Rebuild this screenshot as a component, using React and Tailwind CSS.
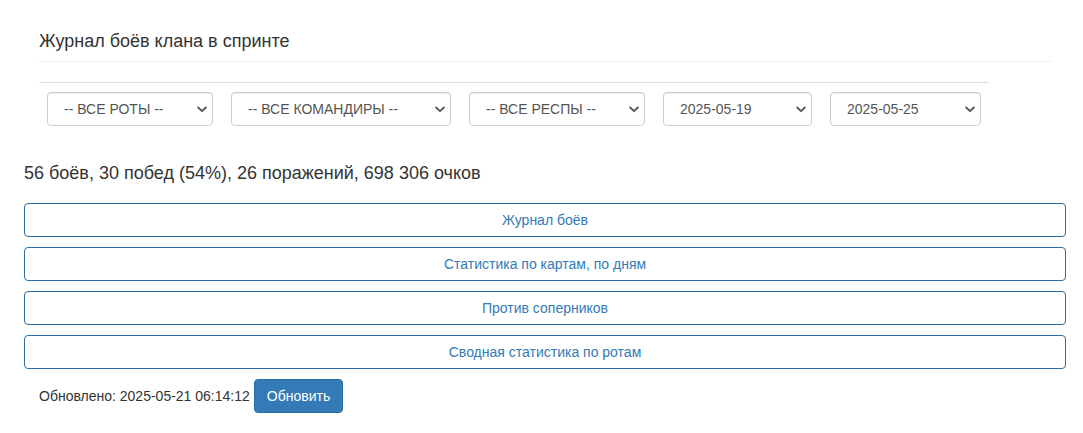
import React from "react";

function Chevron() {
  return (
    <svg width="10" height="7" viewBox="0 0 10 7" className="shrink-0">
      <path d="M1.2 1.5 L5 5.2 L8.8 1.5" fill="none" stroke="#555" strokeWidth="1.8" strokeLinecap="round" strokeLinejoin="round" />
    </svg>
  );
}

function Select({ label, w }) {
  return (
    <div
      className={`flex h-[34px] items-center justify-between rounded-[4px] border border-[#ccc] bg-white pl-[16px] pr-[5px] text-[14px] text-[#555] shadow-[inset_0_1px_1px_rgba(0,0,0,0.075)] ${w}`}
    >
      <span className="leading-[20px]">{label}</span>
      <Chevron />
    </div>
  );
}

function BlockButton({ children }) {
  return (
    <div className="flex h-[34px] items-center justify-center rounded-[4px] border border-[#2e6da4] bg-white text-[14px] leading-[20px] text-[#337ab7]">
      {children}
    </div>
  );
}

export default function App() {
  return (
    <div
      className="w-[1083px] bg-white text-[#333]"
      style={{ fontFamily: '"Liberation Sans", Arial, sans-serif' }}
    >
      <div className="pl-[39px] pr-[32px]">
        <div className="border-b border-[#eee] pt-[31px] pb-[10px] text-[18px] leading-[20px]">
          Журнал боёв клана в спринте
        </div>
      </div>
      <div className="pl-[39px] pr-[94px] pt-[20px]">
        <div className="border-t border-[#ddd]" />
      </div>
      <div className="flex gap-[18px] pl-[47px] pt-[9px]">
        <Select label="-- ВСЕ РОТЫ --" w="w-[166px]" />
        <Select label="-- ВСЕ КОМАНДИРЫ --" w="w-[220px]" />
        <Select label="-- ВСЕ РЕСПЫ --" w="w-[176px]" />
        <Select label="2025-05-19" w="w-[149px]" />
        <Select label="2025-05-25" w="w-[151px]" />
      </div>
      <div className="pl-[24px] pt-[37px] text-[18px] leading-[20px]">
        56 боёв, 30 побед (54%), 26 поражений, 698 306 очков
      </div>
      <div className="flex flex-col gap-[10px] pl-[24px] pr-[17px] pt-[20px]">
        <BlockButton>Журнал боёв</BlockButton>
        <BlockButton>Статистика по картам, по дням</BlockButton>
        <BlockButton>Против соперников</BlockButton>
        <BlockButton>Сводная статистика по ротам</BlockButton>
      </div>
      <div className="flex items-center gap-[4px] pl-[39px] pt-[10px] pb-[20px] text-[14px] leading-[20px]">
        <span>Обновлено: 2025-05-21 06:14:12</span>
        <div className="flex h-[34px] items-center rounded-[4px] border border-[#2e6da4] bg-[#337ab7] px-[12px] text-white">
          Обновить
        </div>
      </div>
    </div>
  );
}
